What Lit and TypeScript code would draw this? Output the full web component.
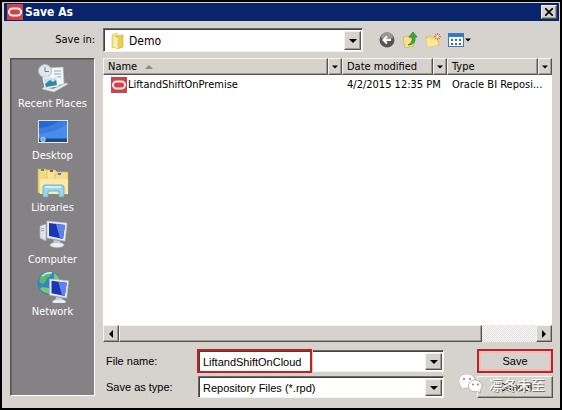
import { LitElement, html, css, svg } from "lit";
import { customElement, property } from "lit/decorators.js";

const oracle = html`<svg width="16" height="16" viewBox="0 0 16 16" aria-hidden="true">
  <rect width="16" height="16" fill="#cb444a" />
  <rect x="2" y="4.5" width="12" height="7" rx="3.5" fill="none" stroke="#ffe9e6" stroke-width="2" />
</svg>`;

const folder = html`<svg width="16" height="18" viewBox="0 0 16 18" aria-hidden="true">
  <path d="M2 3l5-2v14l-5 1z" fill="#f6e48c" stroke="#d8c05a" stroke-width=".6" />
  <path d="M6 4l7-1v12l-6 2z" fill="#e9cd55" stroke="#c9a93c" stroke-width=".6" />
  <path d="M3 4l5 2v11l-5-2z" fill="#fbefad" stroke="#dcc468" stroke-width=".6" />
</svg>`;

const monitor = svg`
  <path d="M8 2l20 2-2 18-18-3z" fill="#e9eef2" stroke="#b8c0c8" stroke-width=".7" />
  <path d="M10 4l16 2-2 14-14-3z" fill="#1d35b4" />
  <path d="M17 5l9 1-2 14-3-1z" fill="#5f83ea" />
  <path d="M15 21l6 1 1 3-8-1z" fill="#c9cfd4" />
  <ellipse cx="18" cy="26" rx="7" ry="2.6" fill="#eceff1" stroke="#b5babf" stroke-width=".6" />`;

const placeIcons = {
  recent: svg`
    <path d="M11 5l15-1 1 17-15 3z" fill="#f1f6f7" stroke="#b9c6cc" stroke-width=".7" />
    <path d="M17 8h7M17 11h7M18 14h6" stroke="#8aa9b3" />
    <circle cx="8" cy="8" r="6.5" fill="#dfe8ea" stroke="#aebcc0" />
    <path d="M8 4v4.500h4" fill="none" stroke="#6d8288" />
    <path d="M6 15l14-1 1 9-13 2z" fill="#bfe3ec" stroke="#fff" />
    <path d="M8 21l5-4 3 2 3-2 1 5-11 2z" fill="#3786a3" />
    <path d="M5 26l12 3 14-8-2-1-13 6-9-2z" fill="#e7edee" stroke="#b2bfc2" stroke-width=".5" />`,
  desktop: svg`
    <rect x="1" y="5" width="30" height="23" fill="#dbeafa" />
    <rect x="2" y="6" width="28" height="21" fill="#2766d4" />
    <path d="M2 18Q18 16 30 6v17H2z" fill="#4a8ceb" />
    <path d="M2 13Q14 12 22 6h8v3Q20 17 2 19z" fill="#3c7ce0" />
    <rect x="2" y="24" width="28" height="3" fill="#28486f" />
    <circle cx="6" cy="24.500" r="2.300" fill="#5fb5de" stroke="#d5f1fa" stroke-width=".7" />`,
  libraries: svg`
    <path d="M1 2h8l2 2h6v22H1z" fill="#f3d982" stroke="#d0ad4c" stroke-width=".6" />
    <path d="M10 3h8l2 2h7v21H10z" fill="#f8e39a" stroke="#d3b45a" stroke-width=".6" />
    <path d="M18 7h6l1-2h6v22H18z" fill="#f6dd8c" stroke="#d0ad4c" stroke-width=".6" />
    <path d="M3 12h28v15H3z" fill="#fbeaa9" />
    <path d="M4 2h3v2H4z" fill="#3e9a46" /><path d="M13 3h3v2h-3z" fill="#c63c32" /><path d="M21 6h3v2h-3z" fill="#3e83c6" />
    <path d="M6 20q0-2 2-2h16q3 0 3 2v10h-5v-6h-11v6H6z" fill="#9bd6ea" stroke="#59a8c8" stroke-width=".8" />
    <path d="M8 20h16" stroke="#e3f7fc" stroke-width="1.500" />`,
  computer: svg`
    <path d="M3 7l6-2v17l-6-3z" fill="#dfe4e6" stroke="#a9b1b5" stroke-width=".7" />
    <path d="M4 10l3-.5M4 12l3-.5" stroke="#7f8b91" stroke-width=".7" />
    <g transform="translate(2)">${monitor}</g>`,
  network: svg`
    <circle cx="12" cy="12" r="11.500" fill="#2f85c5" />
    <path d="M3 6Q8 0 14 1q1 4-4 6-1 5-5 6-4-2-2-7z" fill="#5fbb5f" />
    <path d="M17 2q5 3 6 8l-6-2zM5 16l7 1 1 6Q6 22 3 18z" fill="#7cc86a" />
    <path d="M5 5q5-4 10-3" stroke="#cbeef5" stroke-width="1.500" fill="none" />
    <g transform="translate(5 6) scale(.95)">${monitor}</g>`,
};
type Place = keyof typeof placeIcons;

const places: { id: Place; label: string }[] = [
  { id: "recent", label: "Recent Places" },
  { id: "desktop", label: "Desktop" },
  { id: "libraries", label: "Libraries" },
  { id: "computer", label: "Computer" },
  { id: "network", label: "Network" },
];

const files = [{ name: "LiftandShiftOnPremise", date: "4/2/2015 12:35 PM", type: "Oracle BI Reposi..." }];

const raised = css`
  .raised {
    border: 1px solid;
    border-color: #f4f3f0 #55534f #55534f #f4f3f0;
    box-shadow: inset -1px -1px #a09d96;
    background: #d6d3ce;
  }
`;

@customElement("arrow-glyph")
class ArrowGlyph extends LitElement {
  @property() dir = "down";
  @property({ type: Boolean }) small = false;
  static styles = css`
    :host { display: flex; }
    svg { display: block; }
  `;
  render() {
    const paths: Record<string, string> = { down: "M0 2h8L4 6z", left: "M6 0v8L2 4z", right: "M2 0v8l4-4z", up: "M0 6h8L4 2z" };
    const s = this.small ? 6 : 8;
    return html`<svg width=${s} height=${s} viewBox="0 0 8 8" aria-hidden="true"><path d=${paths[this.dir]} fill="currentColor" /></svg>`;
  }
}

@customElement("places-bar")
class PlacesBar extends LitElement {
  static styles = css`
    :host { display: block; background: #848284; border: 1px solid; border-color: #55534f #fff #fff #55534f; box-shadow: inset 1px 1px #6b696b; }
    nav { display: flex; flex-direction: column; padding-top: 4px; }
    button { display: flex; flex-direction: column; align-items: center; gap: 2px; height: 52px; padding: 0; border: 0; background: none;
      color: #fff; font: 11px/14px "DejaVu Sans Condensed", "DejaVu Sans", sans-serif; white-space: nowrap; }
    svg { display: block; flex: none; }
  `;
  render() {
    return html`<nav aria-label="Places">
      ${places.map((p) => html`<button type="button"><svg width="32" height="32" viewBox="0 0 32 32" aria-hidden="true">${placeIcons[p.id]}</svg>${p.label}</button>`)}
    </nav>`;
  }
}

@customElement("file-list")
class FileList extends LitElement {
  static styles = [raised, css`
    :host { display: flex; flex-direction: column; background: #fff; min-height: 200px; }
    .view { flex: 1; }
    table { width: 100%; border-collapse: collapse; table-layout: fixed; }
    .date, .type { width: 105px; }
    th { padding: 0; font-weight: 400; text-align: left; }
    .head { display: flex; height: 17px; line-height: 15px; }
    .title { flex: 1; display: flex; align-items: center; gap: 8px; padding-left: 4px; }
    .head, .head .raised { box-sizing: border-box; }
    .head button { width: 14px; padding: 0; display: flex; align-items: center; justify-content: center; color: #000; }
    .sort { color: #8d8a86; }
    td { padding: 1px 0 0 5px; height: 17px; white-space: nowrap; overflow: hidden; }
    td:first-child { padding-left: 8px; }
    .file { display: flex; align-items: center; gap: 1px; }
    .scroll { display: flex; height: 17px; }
    .scroll button { box-sizing: border-box; width: 16px; padding: 0; display: flex; align-items: center; justify-content: center; color: #000; }
    .track { flex: 1; display: flex; background: repeating-conic-gradient(#fff 0 25%, #dedbd6 0 50%) 0 0 / 2px 2px; }
    .thumb { width: 87%; box-sizing: border-box; }
  `];
  column(label: string, sorted = false) {
    return html`<div class="head">
      <span class="title raised">${label}${sorted ? html`<arrow-glyph class="sort" dir="up"></arrow-glyph>` : ""}</span>
      <button class="raised" type="button" aria-label="Filter ${label}"><arrow-glyph small></arrow-glyph></button>
    </div>`;
  }
  render() {
    return html`
      <div class="view"><table>
        <thead><tr>
          <th>${this.column("Name", true)}</th>
          <th class="date">${this.column("Date modified")}</th>
          <th class="type">${this.column("Type")}</th>
        </tr></thead>
        <tbody>${files.map((f) => html`<tr>
          <td><span class="file">${oracle}${f.name}</span></td><td>${f.date}</td><td>${f.type}</td>
        </tr>`)}</tbody>
      </table></div>
      <div class="scroll">
        <button class="raised" type="button" aria-label="Scroll left"><arrow-glyph dir="left"></arrow-glyph></button>
        <div class="track"><div class="thumb raised"></div></div>
        <button class="raised" type="button" aria-label="Scroll right"><arrow-glyph dir="right"></arrow-glyph></button>
      </div>`;
  }
}

@customElement("app-root")
class AppRoot extends LitElement {
  static styles = [raised, css`
    :host { display: block; font: 11px/14px "DejaVu Sans Condensed", "DejaVu Sans", sans-serif; color: #000; }
    * { box-sizing: border-box; }
    svg { display: block; flex: none; }
    .dialog { position: relative; min-height: 100vh; display: flex; flex-direction: column; background: #d6d3ce; border: 2px solid #000; padding: 1px 1px 10px 2px; }
    .bar { display: flex; align-items: center; gap: 2px; height: 18px; padding: 0 2px 0 3px; background: #08246b; color: #fff; }
    h1 { flex: 1; margin: 0; font: bold 12px/14px "DejaVu Sans Condensed", "DejaVu Sans", sans-serif; }
    .close { width: 16px; height: 14px; padding: 0; display: flex; align-items: center; justify-content: center; }
    .body { flex: 1; display: grid; grid-template-columns: 85px 1fr; grid-template-rows: 24px 1fr; gap: 6px 8px; padding: 7px 6px 0; }
    .lookin { display: flex; align-items: center; justify-content: flex-end; }
    .top { display: flex; align-items: center; }
    .combo { display: grid; grid-template-columns: 1fr 17px; align-items: stretch; background: #fff; border: 1px solid; border-color: #6b696b #f4f3f0 #f4f3f0 #6b696b; box-shadow: inset 1px 1px #42403e; padding: 2px 1px 1px 2px; }
    .combo select, .combo input { grid-area: 1 / 1 / 2 / 3; min-width: 0; width: 100%; appearance: none; border: 0; outline: 0; margin: 0; padding: 0 18px 0 2px; background: none; color: #000; font: inherit; }
    .combo .drop { grid-area: 1 / 2; display: flex; align-items: center; justify-content: center; pointer-events: none; }
    .combo svg { grid-area: 1 / 1; align-self: center; margin-left: 4px; }
    .where { width: 260px; height: 24px; font-size: 12px; }
    .where select { padding-left: 23px; }
    .tools { display: flex; align-items: center; gap: 7px; margin-left: 16px; }
    .tools button { display: flex; align-items: center; gap: 1px; padding: 0; border: 0; background: none; color: #000; }
    places-bar { margin-bottom: 2px; }
    .main { display: flex; flex-direction: column; gap: 7px; }
    file-list { flex: 1; margin-right: 1px; }
    form { display: grid; grid-template-columns: 88px minmax(0, 246px) minmax(76px, 1fr); grid-template-rows: 24px 22px; gap: 3px 7px; font: 11px/14px "Liberation Sans", Arial, sans-serif; align-items: center; }
    label { padding-left: 3px; }
    form .combo { height: 22px; }
    .field { position: relative; }
    .mark { position: absolute; left: -1px; top: -1px; width: 115px; height: 24px; border: 2px solid #b3262a; box-shadow: 0 0 0 1px #ecc3be; pointer-events: none; }
    .action { justify-self: end; width: 76px; height: 100%; padding: 0; font: inherit; color: #000; }
    .save { border: 2px solid #b3262a; background: #d6d3ce; box-shadow: inset 0 0 0 2px #f3bdb8; }
    .stamp { position: absolute; right: 15px; bottom: 14px; display: flex; align-items: center; gap: 6px; color: #fff; pointer-events: none;
      font: 14px/18px "Noto Sans CJK SC", sans-serif; text-shadow: 1px 1px #77746f; }
  `];
  render() {
    return html`<main class="dialog">
      <header class="bar">${oracle}<h1>Save As</h1>
        <button class="close raised" type="button" aria-label="Close"><svg width="8" height="8" viewBox="0 0 8 8"><path d="M0 0l8 8M8 0L0 8" stroke="#000" stroke-width="1.600" /></svg></button>
      </header>
      <div class="body">
        <label class="lookin" for="where">Save in:</label>
        <div class="top">
          <div class="combo where">${folder}<select id="where"><option>Demo</option></select><span class="drop raised"><arrow-glyph></arrow-glyph></span></div>
          <div class="tools">
            <button type="button" aria-label="Back"><svg width="16" height="16" viewBox="0 0 16 16"><circle cx="8" cy="8" r="7.500" fill="#555" /><path d="M2 6a6 6 0 0 1 12 0q-6 3-12 0" fill="#999" /><path d="M12 8H5M8 4.500L4.500 8 8 11.500" fill="none" stroke="#fff" stroke-width="2" /></svg></button>
            <button type="button" aria-label="Up one level"><svg width="16" height="16" viewBox="0 0 16 16"><path d="M1 5l5-1 1 2 5-1v9l-9 2z" fill="#f5e28b" stroke="#cdb24c" stroke-width=".7" /><path d="M6 13Q11 11 10 5H7l4-5 4 5h-2q1 8-7 8z" fill="#43a83b" stroke="#257a25" stroke-width=".7" /></svg></button>
            <button type="button" aria-label="New folder"><svg width="16" height="16" viewBox="0 0 16 16"><path d="M1 5l5-1 2 2 5-1 1 8-11 2z" fill="#f5dc7c" stroke="#d6ba58" stroke-width=".7" /><path d="M1 7l10 1 2 5-10 2z" fill="#fbe998" /><path d="M12.500 1v7M9 4.500h7M10 2l5 5M15 2l-5 5" stroke="#e06a3c" stroke-width="1" /><circle cx="12.500" cy="4.500" r="1.500" fill="#fff0b0" /></svg></button>
            <button type="button" aria-label="Views"><svg width="16" height="16" viewBox="0 0 16 16"><rect x=".5" y="1.500" width="15" height="13" fill="#fff" stroke="#3d76b6" /><path d="M0 1h16v4H0z" fill="#3878c4" /><path d="M3 7h2v2H3zM7 7h2v2H7zM11 7h2v2h-2zM3 11h2v2H3zM7 11h2v2H7zM11 11h2v2h-2z" fill="#3e6c9a" /></svg><arrow-glyph small></arrow-glyph></button>
          </div>
        </div>
        <places-bar></places-bar>
        <div class="main">
          <file-list></file-list>
          <form @submit=${(e: Event) => e.preventDefault()}>
            <label for="name">File name:</label>
            <div class="field"><div class="combo"><input id="name" value="LiftandShiftOnCloud" autocomplete="off" /><span class="drop raised"><arrow-glyph></arrow-glyph></span></div><span class="mark"></span></div>
            <button class="action save" type="submit">Save</button>
            <label for="type">Save as type:</label>
            <div class="combo"><select id="type"><option>Repository Files (*.rpd)</option></select><span class="drop raised"><arrow-glyph></arrow-glyph></span></div>
            <button class="action raised" type="button">Cancel</button>
          </form>
        </div>
      </div>
      <div class="stamp"><svg width="24" height="20" viewBox="0 0 24 20" aria-hidden="true">
        <path d="M8 0c5 0 8 3 8 7s-3 7-8 7l-3 0-3 2 .7-3C1 12 0 10 0 7c0-4 3-7 8-7z" fill="#fff" stroke="#999" stroke-width=".4" />
        <path d="M16 6c4 0 7 3 7 6 0 2-1 3-2 4l.5 3-3-1.500c-6 1-9-2-9-5.500s3-6 6.500-6z" fill="#fff" stroke="#888" stroke-width=".6" />
        <g fill="#777"><circle cx="5" cy="5" r="1" /><circle cx="11" cy="5" r="1" /><circle cx="14" cy="10.500" r=".9" /><circle cx="19" cy="10.500" r=".9" /></g>
      </svg><span>凛冬未至</span></div>
    </main>`;
  }
}
